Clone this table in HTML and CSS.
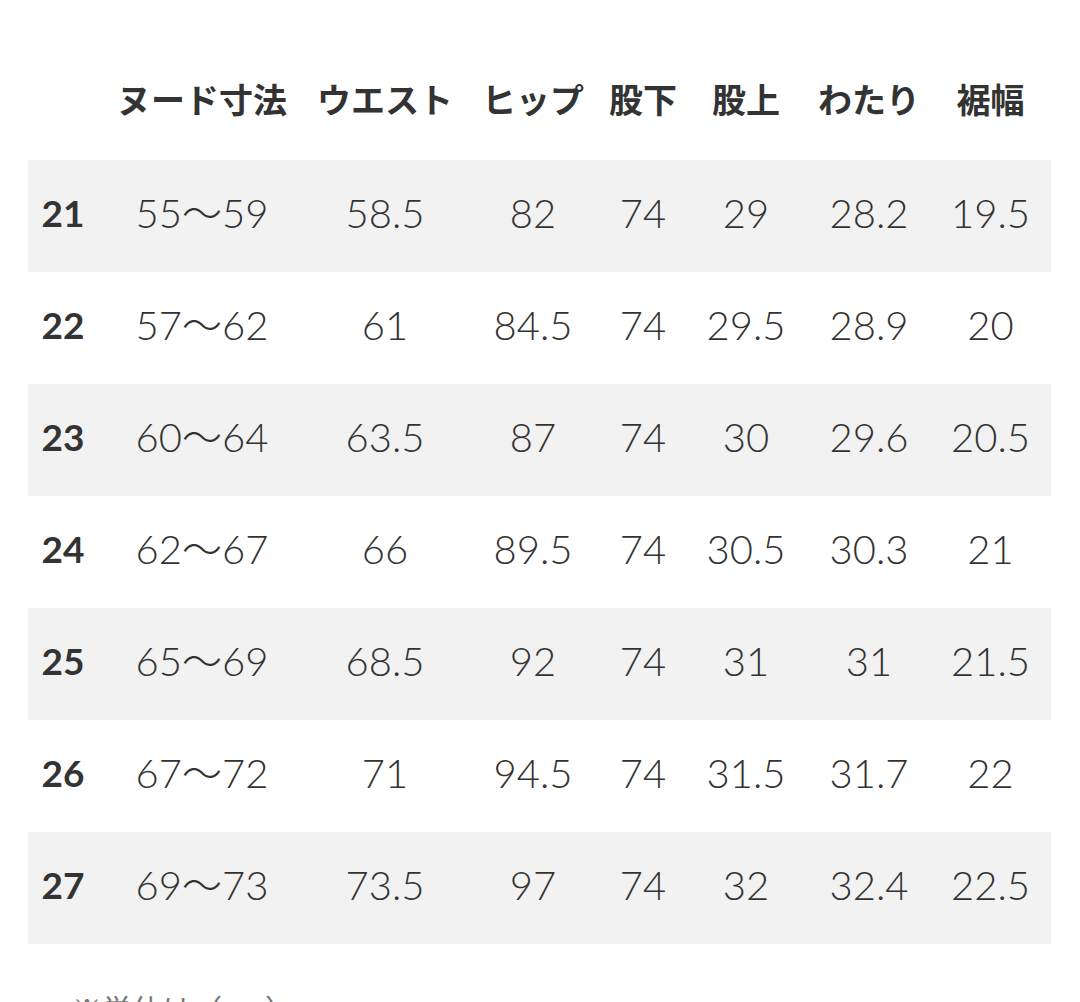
FILE: index.html
```html
<!DOCTYPE html>
<html lang="ja">
<head>
<meta charset="utf-8">
<link rel="stylesheet" href="styles.css">
</head>
<body>
<div class="page">
  <div class="table">
    <div class="row head">
      <div class="cell"></div>
      <div class="cell">ヌード寸法</div>
      <div class="cell">ウエスト</div>
      <div class="cell">ヒップ</div>
      <div class="cell">股下</div>
      <div class="cell">股上</div>
      <div class="cell">わたり</div>
      <div class="cell">裾幅</div>
    </div>
    <div class="row shade">
      <div class="cell size">21</div><div class="cell">55～59</div><div class="cell">58.5</div><div class="cell">82</div><div class="cell">74</div><div class="cell">29</div><div class="cell">28.2</div><div class="cell">19.5</div>
    </div>
    <div class="row">
      <div class="cell size">22</div><div class="cell">57～62</div><div class="cell">61</div><div class="cell">84.5</div><div class="cell">74</div><div class="cell">29.5</div><div class="cell">28.9</div><div class="cell">20</div>
    </div>
    <div class="row shade">
      <div class="cell size">23</div><div class="cell">60～64</div><div class="cell">63.5</div><div class="cell">87</div><div class="cell">74</div><div class="cell">30</div><div class="cell">29.6</div><div class="cell">20.5</div>
    </div>
    <div class="row">
      <div class="cell size">24</div><div class="cell">62～67</div><div class="cell">66</div><div class="cell">89.5</div><div class="cell">74</div><div class="cell">30.5</div><div class="cell">30.3</div><div class="cell">21</div>
    </div>
    <div class="row shade">
      <div class="cell size">25</div><div class="cell">65～69</div><div class="cell">68.5</div><div class="cell">92</div><div class="cell">74</div><div class="cell">31</div><div class="cell">31</div><div class="cell">21.5</div>
    </div>
    <div class="row">
      <div class="cell size">26</div><div class="cell">67～72</div><div class="cell">71</div><div class="cell">94.5</div><div class="cell">74</div><div class="cell">31.5</div><div class="cell">31.7</div><div class="cell">22</div>
    </div>
    <div class="row shade">
      <div class="cell size">27</div><div class="cell">69～73</div><div class="cell">73.5</div><div class="cell">97</div><div class="cell">74</div><div class="cell">32</div><div class="cell">32.4</div><div class="cell">22.5</div>
    </div>
  </div>
  <p class="note">※単位は（cm）</p>
</div>
</body>
</html>
```

FILE: styles.css
```css
html, body {
  margin: 0;
  padding: 0;
  background: #ffffff;
}
.page {
  padding: 48px 29px 0 28px;
  font-family: "Lato", "Noto Sans CJK JP", sans-serif;
  color: #333333;
}
.table {
  display: flex;
  flex-direction: column;
}
.row {
  display: grid;
  grid-template-columns: 70px 208px 158px 138px 82px 124px 122px 121px;
  height: 112px;
  align-items: center;
}
.shade {
  background: #f2f2f2;
}
.cell {
  text-align: center;
  font-size: 40px;
  font-weight: 300;
  line-height: 1;
  white-space: nowrap;
  padding-bottom: 7px;
}
.head .cell {
  font-family: "Noto Sans CJK JP", sans-serif;
  font-weight: 700;
  font-size: 34px;
  padding-bottom: 10px;
}
.cell.size {
  font-weight: 700;
  font-size: 37px;
}
.note {
  margin: 42px 0 0 44px;
  font-family: "Noto Sans CJK JP", sans-serif;
  font-size: 30px;
  color: #777777;
}
```
